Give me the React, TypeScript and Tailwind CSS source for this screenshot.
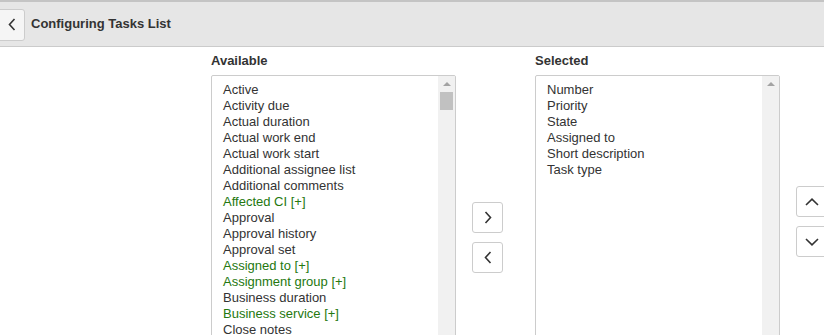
import React from "react";

type Field = { label: string; ref?: boolean };

const available: Field[] = [
	{ label: "Active" },
	{ label: "Activity due" },
	{ label: "Actual duration" },
	{ label: "Actual work end" },
	{ label: "Actual work start" },
	{ label: "Additional assignee list" },
	{ label: "Additional comments" },
	{ label: "Affected CI [+]", ref: true },
	{ label: "Approval" },
	{ label: "Approval history" },
	{ label: "Approval set" },
	{ label: "Assigned to [+]", ref: true },
	{ label: "Assignment group [+]", ref: true },
	{ label: "Business duration" },
	{ label: "Business service [+]", ref: true },
	{ label: "Close notes" },
	{ label: "Closed" },
	{ label: "Closed by [+]", ref: true },
];

const selected: Field[] = [
	{ label: "Number" },
	{ label: "Priority" },
	{ label: "State" },
	{ label: "Assigned to" },
	{ label: "Short description" },
	{ label: "Task type" },
];

const Chevron = ({ dir }: { dir: "left" | "right" | "up" | "down" }) => {
	if (dir === "left" || dir === "right") {
		return (
			<svg width="8" height="13" viewBox="0 0 8 13" fill="none">
				<path
					d={dir === "right" ? "M1.5 1 L6.5 6.5 L1.5 12" : "M6.5 1 L1.5 6.5 L6.5 12"}
					stroke="#333"
					strokeWidth="1.6"
				/>
			</svg>
		);
	}
	return (
		<svg width="14" height="8" viewBox="0 0 14 8" fill="none">
			<path
				d={dir === "up" ? "M1 7 L7 1.2 L13 7" : "M1 1 L7 6.8 L13 1"}
				stroke="#333"
				strokeWidth="1.6"
			/>
		</svg>
	);
};

const MoveButton = ({ dir }: { dir: "left" | "right" | "up" | "down" }) => (
	<button className="w-[31px] h-[31px] shrink-0 flex items-center justify-center bg-white border border-[#cccccc] rounded-[3px]">
		<Chevron dir={dir} />
	</button>
);

const Scrollbar = ({ thumb }: { thumb?: boolean }) => (
	<div className="w-[17px] bg-[#f1f1f1] flex flex-col items-center shrink-0">
		<div className="h-[16px] flex items-center justify-center">
			<div className="w-0 h-0 border-l-[4px] border-r-[4px] border-b-[4px] border-l-transparent border-r-transparent border-b-[#a3a3a3]" />
		</div>
		{thumb && <div className="w-[13px] h-[18px] bg-[#c1c1c1]" />}
	</div>
);

const FieldList = ({ title, items, thumb }: { title: string; items: Field[]; thumb?: boolean }) => (
	<div className="flex flex-col w-[245px] shrink-0">
		<div className="text-[13px] leading-[16px] font-bold text-[#333]">{title}</div>
		<div className="mt-[6px] h-[300px] border border-[#cccccc] rounded-[2px] flex overflow-hidden">
			<ul className="flex-1 pt-[6px] pl-[11px]">
				{items.map((f) => (
					<li
						key={f.label}
						className={
							"text-[13px] leading-[16px] whitespace-nowrap " +
							(f.ref ? "text-[#25780f]" : "text-[#333]")
						}
					>
						{f.label}
					</li>
				))}
			</ul>
			<Scrollbar thumb={thumb} />
		</div>
	</div>
);

export default function App() {
	return (
		<div className="w-[824px] h-[335px] overflow-hidden bg-white font-['Liberation_Sans',Arial,sans-serif]">
			<header className="h-[47px] bg-[#e6e6e6] border-t-2 border-t-[#c4c4c4] border-b border-b-[#cbcbcb] flex items-center">
				<button className="ml-[-8px] mt-[1px] w-[33px] h-[32px] bg-[#f5f5f5] border border-[#cccccc] rounded-[3px] flex items-center justify-center pl-[6px]">
					<Chevron dir="left" />
				</button>
				<h1 className="ml-[6px] text-[13px] font-bold text-[#333]">Configuring Tasks List</h1>
			</header>
			<main className="flex items-start pl-[211px] pt-[6px]">
				<FieldList title="Available" items={available} thumb />
				<div className="ml-[16px] pt-[149px] flex flex-col gap-[9px] shrink-0">
					<MoveButton dir="right" />
					<MoveButton dir="left" />
				</div>
				<div className="ml-[32px] shrink-0">
					<FieldList title="Selected" items={selected} />
				</div>
				<div className="ml-[16px] pt-[133px] flex flex-col gap-[9px] shrink-0">
					<MoveButton dir="up" />
					<MoveButton dir="down" />
				</div>
			</main>
		</div>
	);
}
